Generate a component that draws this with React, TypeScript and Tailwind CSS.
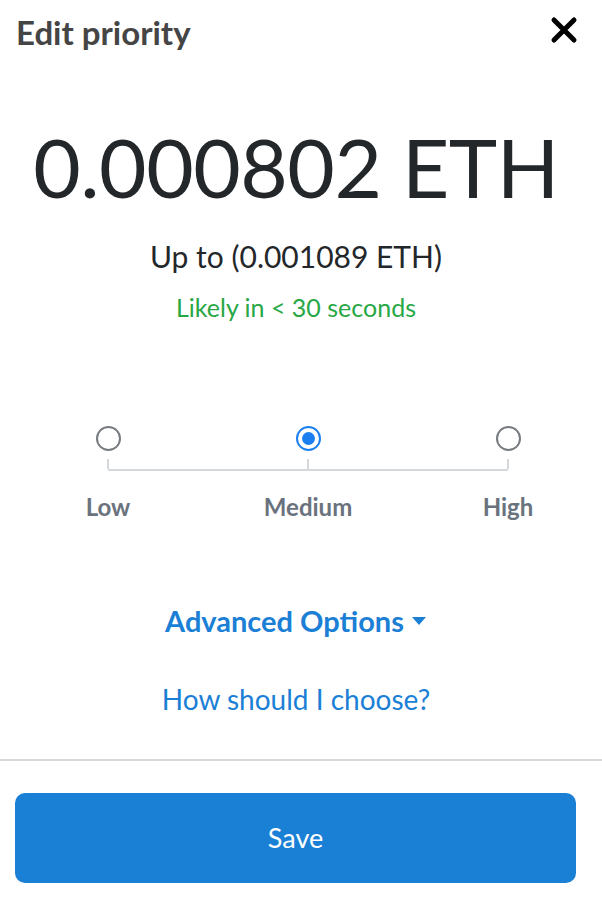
import { useState } from "react"

const levels = ["Low", "Medium", "High"]

const App = () => {
  const [selected, setSelected] = useState(1)

  return (
    <div className="w-[602px] h-[914px] bg-white flex flex-col font-['Lato','Noto_Sans',sans-serif]">
      {/* Header */}
      <div className="flex items-start justify-between pl-[16px] pr-[24px] pt-[10px]">
        <h1 className="text-[33px] leading-[44px] font-bold text-[#454545]">Edit priority</h1>
        <button className="mt-[6px]" aria-label="Close">
          <svg width="28" height="28" viewBox="0 0 28 28">
            <path d="M4 4 L24 24 M24 4 L4 24" stroke="#000" strokeWidth="5" strokeLinecap="round" />
          </svg>
        </button>
      </div>

      {/* Amounts */}
      <div className="flex flex-col items-center mt-[62px] pr-[10px]">
        <div className="text-[82px] leading-[100px] text-[#24272a] tracking-[-0.5px]">0.000802 ETH</div>
        <div className="mt-[20px] text-[30px] leading-[40px] text-[#24272a]">Up to (0.001089 ETH)</div>
        <div className="mt-[15px] text-[25px] leading-[32px] text-[#28a745]">Likely in &lt; 30 seconds</div>
      </div>

      {/* Priority selector */}
      <div className="mt-[103px] ml-[108px] w-[400px]">
        <div className="flex justify-between">
          {levels.map((l, i) => (
            <div key={l} className="w-0 flex flex-col items-center">
              <button
                onClick={() => setSelected(i)}
                className={`w-[25px] h-[25px] shrink-0 rounded-full border-2 flex items-center justify-center ${
                  i === selected ? "border-[#1c7ff0]" : "border-[#777b80]"
                }`}
                aria-label={l}
              >
                {i === selected && <span className="w-[13px] h-[13px] rounded-full bg-[#1c7ff0]" />}
              </button>
              <div className="w-[2px] h-[10px] bg-[#d6d9dc] mt-[8px]" />
            </div>
          ))}
        </div>
        <div className="h-[2px] bg-[#d6d9dc]" />
        <div className="flex justify-between mt-[20px]">
          {levels.map((l) => (
            <div key={l} className="w-0 flex justify-center">
              <span className="text-[24px] leading-[32px] font-bold text-[#6a737d] whitespace-nowrap">{l}</span>
            </div>
          ))}
        </div>
      </div>

      {/* Links */}
      <div className="flex flex-col items-center mt-[80px] pr-[10px]">
        <button className="flex items-center gap-[7px] text-[29px] leading-[36px] font-bold text-[#1b7fd6]">
          Advanced Options
          <svg width="16" height="10" viewBox="0 0 16 10">
            <path d="M1 1 L15 1 L8 9 Z" fill="#1b7fd6" />
          </svg>
        </button>
        <a className="mt-[42px] text-[28px] leading-[36px] text-[#1b7fd6]">How should I choose?</a>
      </div>

      <div className="mt-[42px] h-[2px] bg-[#d6d9dc]" />

      {/* Footer */}
      <div className="pl-[15px] pr-[26px] pt-[32px]">
        <button className="w-full h-[90px] rounded-[10px] bg-[#1a80d6] text-white text-[27px]">Save</button>
      </div>
    </div>
  )
}

export default App
